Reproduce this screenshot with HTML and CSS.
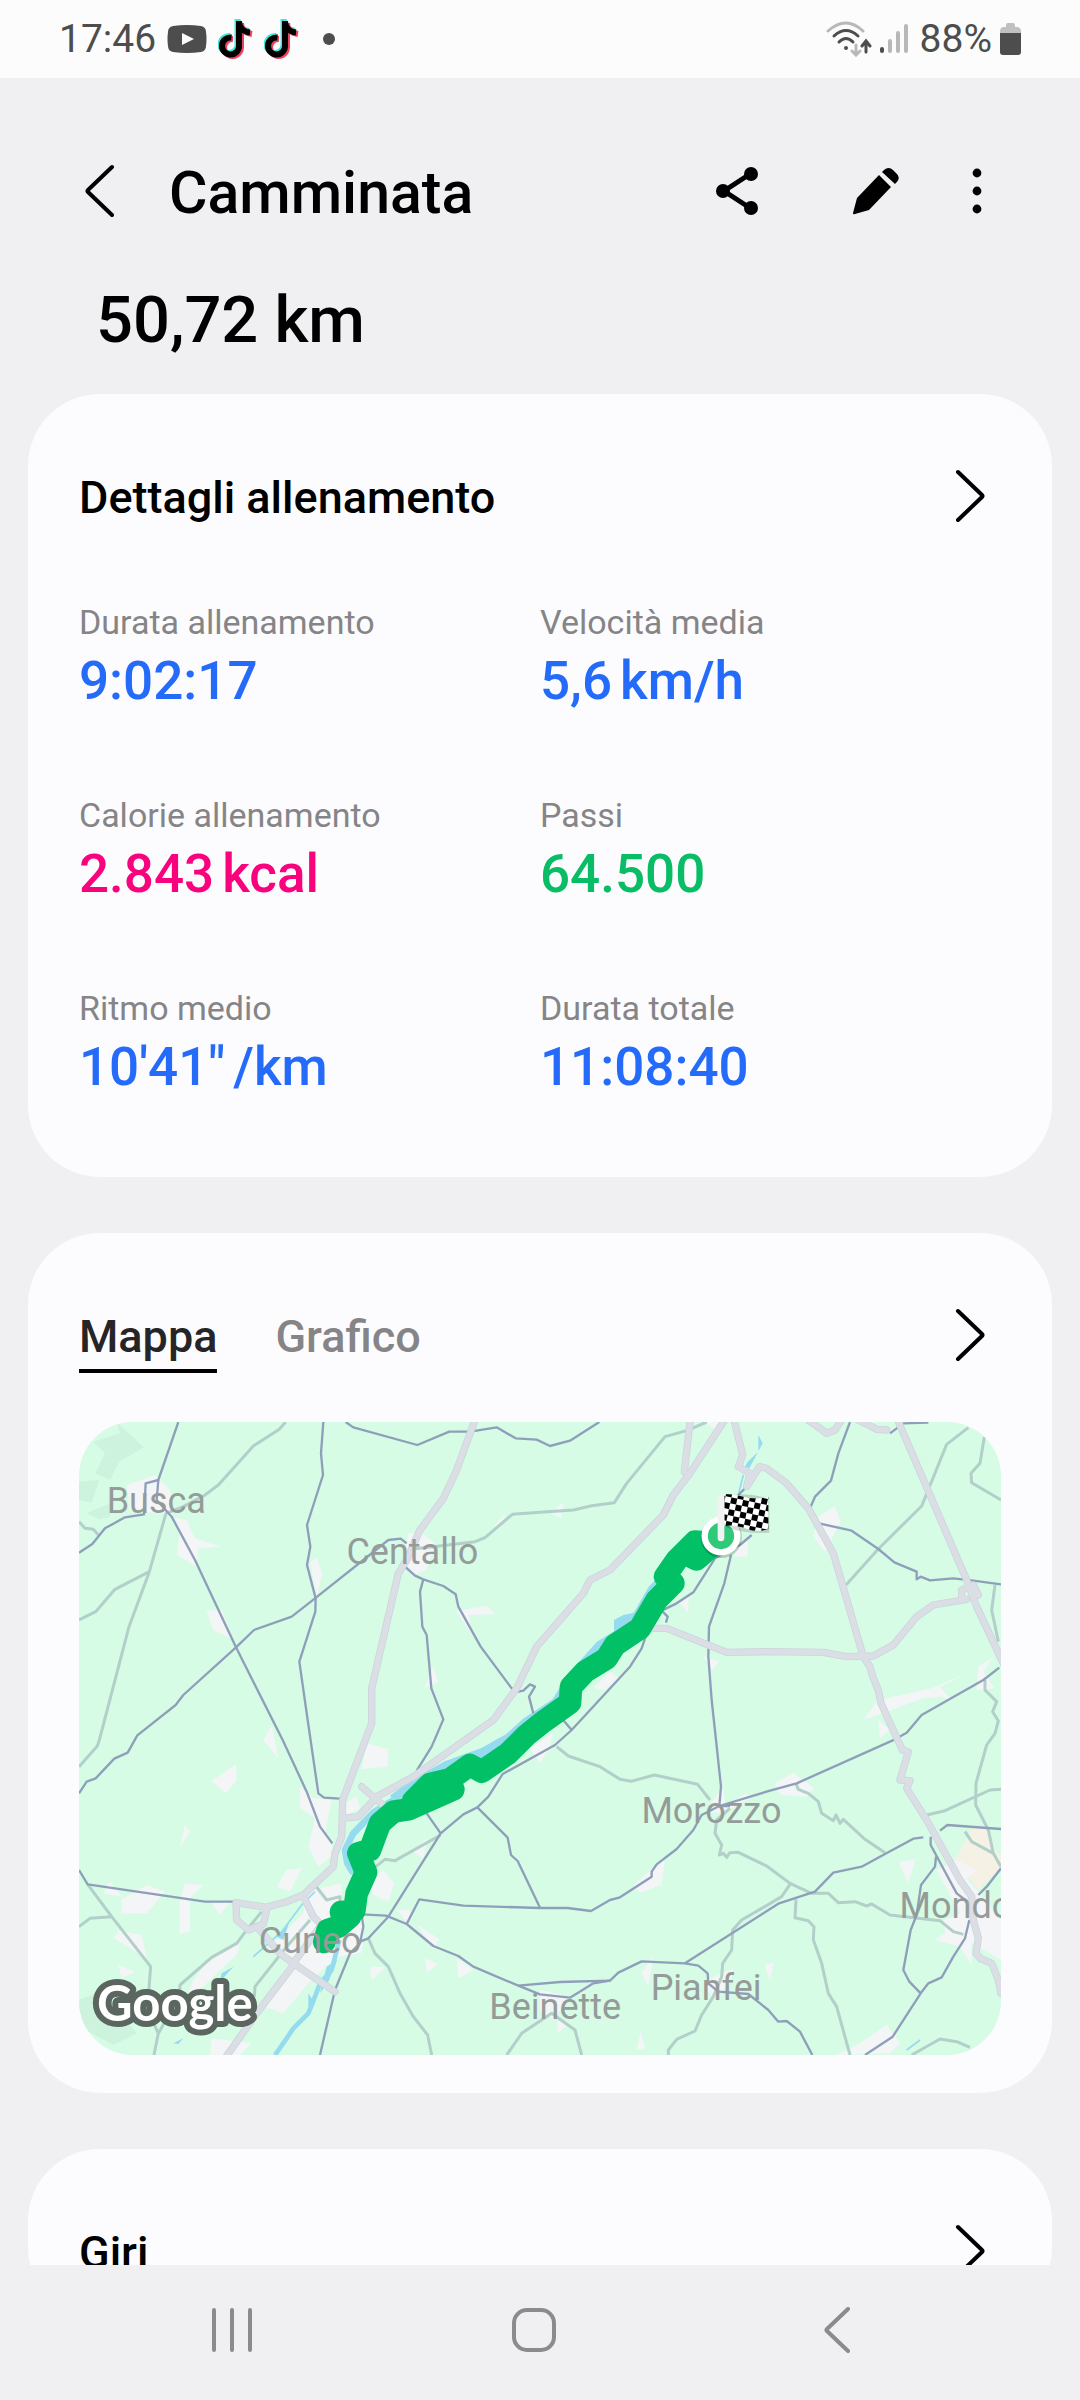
FILE: index.html
```html
<!DOCTYPE html>
<html lang="it">

<head>
    <meta charset="UTF-8">
    <meta name="viewport" content="width=device-width, initial-scale=1.0">
    <title>Camminata</title>
    <link rel="stylesheet" href="styles.css">
</head>

<body>
    <div class="status-bar">
        <span class="status-text">17:46</span>
        <svg class="youtube" width="40" height="28" viewBox="0 0 40 28">
            <path d="M6 1Q20 -1 34 1Q39 2 39 7Q40 14 39 21Q39 26 34 27Q20 29 6 27Q1 26 1 21Q0 14 1 7Q1 2 6 1Z" fill="#4d4d4d" />
            <path d="M15 8L27 14L15 20Z" fill="#fcfcfc" />
        </svg>
        <svg class="tiktok" width="35" height="40" viewBox="0 0 35 40">
            <g fill="none" stroke-width="6">
                <path d="M12 17A8.5 8.5 0 1 0 19.500 25V0C20 7 24 11 31 12" stroke="#3fe6e0" />
                <path d="M15 20A8.500 8.500 0 1 0 23 28V4C23 10 27 14 34 15" stroke="#f0405f" />
                <path d="M13.500 18.500A8.500 8.500 0 1 0 21 26.500V2C21 9 26 13 32 13.500" stroke="#000" />
            </g>
        </svg>
        <svg class="tiktok" width="35" height="40" viewBox="0 0 35 40">
            <g fill="none" stroke-width="6">
                <path d="M12 17A8.5 8.5 0 1 0 19.500 25V0C20 7 24 11 31 12" stroke="#3fe6e0" />
                <path d="M15 20A8.500 8.500 0 1 0 23 28V4C23 10 27 14 34 15" stroke="#f0405f" />
                <path d="M13.500 18.500A8.500 8.500 0 1 0 21 26.500V2C21 9 26 13 32 13.500" stroke="#000" />
            </g>
        </svg>
        <span class="more-dot"></span>
        <div class="status-right">
            <svg width="46" height="36" viewBox="0 0 46 36">
                <g fill="none" stroke-width="3" stroke-linecap="round">
                    <path d="M2 10Q20 -6 37 10" stroke="#b8b8b8" />
                    <path d="M8 15Q20 4 32 15" stroke="#4d4d4d" />
                    <path d="M13 21Q20 14 27 21" stroke="#4d4d4d" />
                    <path d="M30 24V33M26 30L30 34L34 30" stroke="#b8b8b8" />
                    <path d="M40 31V21M36 25L40 20L44 25" stroke="#4d4d4d" />
                </g>
                <circle cx="20" cy="27" r="2" fill="#4d4d4d" />
            </svg>
            <svg class="signal" width="28" height="30" viewBox="0 0 28 30">
                <g fill="none" stroke-width="4" stroke-linecap="round" stroke="#b8b8b8">
                    <path d="M2 25V27" stroke="#4d4d4d" />
                    <path d="M10 17V27M18 9V27M26 2V27" />
                </g>
            </svg>
            <span class="status-text">88%</span>
            <svg class="battery" width="22" height="33" viewBox="0 0 22 33">
                <path d="M6 4V2Q6 0 8 0H13Q15 0 15 2V4H18Q21 5 21 8V10H0V8Q0 5 3 4Z" fill="#c0c0c0" />
                <path d="M0 10H21V29Q21 32 18 32H3Q0 32 0 29Z" fill="#4d4d4d" />
            </svg>
        </div>
    </div>

    <main class="content">
        <header class="top-bar">
            <button type="button" class="icon-btn back" aria-label="Indietro">
                <svg width="30" height="54" viewBox="0 0 30 54">
                    <path d="M27 3L3 26Q2 27 3 28L27 51" class="line" />
                </svg>
            </button>
            <h1>Camminata</h1>
            <button type="button" class="icon-btn share" aria-label="Condividi">
                <svg width="44" height="48" viewBox="0 0 44 48">
                    <path d="M34 7L8 24L34 41" fill="none" stroke="#000" stroke-width="5" />
                    <circle cx="35" cy="7" r="7" />
                    <circle cx="7" cy="24" r="7" />
                    <circle cx="35" cy="41" r="7" />
                </svg>
            </button>
            <button type="button" class="icon-btn edit" aria-label="Modifica">
                <svg width="48" height="48" viewBox="0 0 48 48">
                    <path d="M27 8L39 20L17 43L3 47Q1 48 1 46L5 31Z" />
                    <path d="M30 5Q36 -2 41 3L44 6Q50 11 43 17Z" />
                </svg>
            </button>
            <button type="button" class="icon-btn menu" aria-label="Altre opzioni">
                <svg width="10" height="48" viewBox="0 0 10 48">
                    <circle cx="5" cy="6" r="4.4" />
                    <circle cx="5" cy="24" r="4.4" />
                    <circle cx="5" cy="42" r="4.4" />
                </svg>
            </button>
        </header>
        <p class="distance">50,72 km</p>

        <section class="card">
            <div class="card-head">
                <h2>Dettagli allenamento</h2>
                <button type="button" class="icon-btn open" aria-label="Apri dettagli">
                    <svg width="30" height="54" viewBox="0 0 30 54">
                        <path d="M3 3L27 26Q28 27 27 28L3 51" class="line" />
                    </svg>
                </button>
            </div>
            <dl class="stats">
                <div>
                    <dt>Durata allenamento</dt>
                    <dd class="blue">9:02:17</dd>
                </div>
                <div>
                    <dt>Velocità media</dt>
                    <dd class="blue">5,6<span class="unit">km/h</span></dd>
                </div>
                <div>
                    <dt>Calorie allenamento</dt>
                    <dd class="pink">2.843<span class="unit">kcal</span></dd>
                </div>
                <div>
                    <dt>Passi</dt>
                    <dd class="green">64.500</dd>
                </div>
                <div>
                    <dt>Ritmo medio</dt>
                    <dd class="blue">10'41"<span class="unit">/km</span></dd>
                </div>
                <div>
                    <dt>Durata totale</dt>
                    <dd class="blue">11:08:40</dd>
                </div>
            </dl>
        </section>

        <section class="card">
            <div class="card-head">
                <div class="tabs">
                    <button type="button" class="tab active">Mappa</button>
                    <button type="button" class="tab">Grafico</button>
                </div>
                <button type="button" class="icon-btn open" aria-label="Apri mappa">
                    <svg width="30" height="54" viewBox="0 0 30 54">
                        <path d="M3 3L27 26Q28 27 27 28L3 51" class="line" />
                    </svg>
                </button>
            </div>
            <div class="map">
                <svg class="map-art" viewBox="57 66 2766 1899">
                    <defs>
                        <pattern id="checks" width="36" height="36" patternUnits="userSpaceOnUse" patternTransform="rotate(12 1995 282)">
                            <rect width="36" height="36" fill="#fff" />
                            <path d="M0 0H18V18H0ZM18 18H36V36H18Z" fill="#000" />
                        </pattern>
                    </defs>
                    <rect x="57" y="66" width="2766" height="1899" fill="#d6fce6" />
                    <!-- woods -->
                    <path class="wood" d="M100 125L180 100L170 66L252 142L178 185L150 240L105 220L135 160ZM57 245L118 240L95 308L57 300ZM80 340L150 310V350L120 358ZM57 1800L130 1770L230 1900L160 1935L57 1880Z" />
                    <path class="sand" d="M2740 1280L2785 1275L2805 1350L2823 1370V1400L2755 1470L2685 1380Z" />
                    <!-- towns -->
                    <g class="town">
                        <path d="M200 255L285 225L330 270L335 345L290 340L210 330Z" />
                        <path d="M335 350L380 360L405 415L482 440L415 445L410 500L350 465L358 400Z" />
                        <path d="M440 632L485 630L518 718L460 690Z" />
                        <path d="M750 485L770 475L787 520L770 590Z" />
                        <path d="M1045 400L1085 400L1125 430L1100 510L1060 525L1030 480Z" />
                        <path d="M1187 632L1280 618L1308 642L1225 645L1240 710Z" />
                        <path d="M1118 800L1135 845L1093 865ZM1300 380L1335 343L1330 372Z" />
                        <path d="M635 975L655 1075L610 1020ZM455 1143L528 1092L530 1140L497 1180ZM375 1275L390 1295L360 1342Z" />
                        <path d="M720 1160L760 1195L815 1200L795 1300L825 1360L775 1400L745 1340L765 1255L720 1225Z" />
                        <path d="M920 1030L985 1048L982 1100L905 1108ZM855 1210L890 1190L900 1225L860 1245Z" />
                        <path d="M680 1410L725 1405L690 1475L650 1460Z" />
                        <path d="M130 1480L150 1445L185 1490ZM183 1500L260 1455L315 1475L260 1540L185 1540ZM375 1450L430 1455L390 1495V1595L358 1600V1510ZM455 1510L510 1505L480 1545Z" />
                        <path d="M162 1615L175 1592L245 1605L260 1675ZM175 1695L225 1715L185 1735ZM400 1740L455 1670L540 1630L530 1665L470 1720L370 1820Z" />
                        <path d="M740 1475L845 1450V1500L920 1490L905 1660L830 1670L745 1750L670 1840L600 1815L700 1670L620 1650L730 1540Z" />
                        <path d="M920 1450L970 1410L1003 1450L985 1505L930 1480ZM1010 1530L1050 1530L1045 1570ZM1070 1572L1138 1618L1120 1645ZM930 1700L975 1700L935 1742ZM1095 1675L1133 1692L1100 1720ZM1190 1675L1240 1710L1195 1735ZM455 1915L575 1930L540 1965H450Z" />
                        <path d="M1060 1355L1100 1315L1090 1375ZM1410 1045L1480 1000L1465 1050L1440 1090Z" />
                        <path d="M1475 340L1510 305L1503 355ZM1930 66H1990L1970 90ZM1600 865L1650 815L1675 835L1635 870ZM2025 445L2065 410L2062 470L2025 470Z" />
                        <path d="M2275 350L2325 318L2342 365L2295 455L2260 410ZM1860 610L1885 590V640ZM1930 768L1978 785L1955 810Z" />
                        <path d="M2410 960L2455 900L2615 865L2720 820L2640 862L2680 905L2645 890L2590 895ZM2455 960L2490 990L2460 1015Z" />
                        <path d="M2755 800L2803 768L2770 815L2803 865L2750 870Z" />
                        <path d="M2145 1150L2200 1118L2262 1165L2240 1190L2160 1185ZM1960 1200L1990 1165L1995 1215L2060 1180L2070 1195L1990 1240L1940 1235Z" />
                        <path d="M1720 1455L1815 1375L1805 1455L1740 1478ZM2515 1385L2567 1378L2545 1450Z" />
                        <path d="M2630 1410L2690 1380L2750 1410L2720 1435L2823 1560L2823 1680L2735 1630V1695L2700 1640L2625 1620L2655 1600L2650 1560L2700 1540Z" />
                        <path d="M1930 1745L2020 1705L2010 1750L1960 1800ZM1440 1770L1530 1790L1480 1860L1440 1830ZM1490 1860L1530 1870L1495 1897ZM2115 1695L2140 1688L2130 1745ZM1745 1720L1780 1665L1765 1760ZM1730 1950L1742 1895L1755 1945Z" />
                        <path d="M2330 1965L2400 1930L2480 1875L2520 1930L2490 1960Z" />
                    </g>
                    <!-- rivers -->
                    <path class="river" stroke-width="34" d="M1860 460L1830 520L1780 570L1740 640L1700 690L1620 740L1540 830L1490 910L1400 970L1350 1015L1270 1060L1160 1100L1070 1150L1000 1200" />
                    <path class="river" stroke-width="20" d="M1000 1200L940 1238L880 1300L855 1350L862 1390L880 1420" />
                    <path class="water" d="M1662 690V660L1690 645L1740 635L1720 700L1665 710Z" />
                    <path class="river" stroke-width="14" d="M838 1620L815 1710L780 1750L765 1790L745 1840L700 1885L680 1915L645 1965" />
                    <path class="water" d="M800 1700L832 1680L805 1745L780 1780ZM745 1780L765 1810L745 1850ZM485 1720L520 1700L480 1745ZM340 1930L370 1915L355 1932ZM2095 105L2108 130L2068 205L2055 200L2063 185L2095 155Z" />
                    <path class="river" stroke-width="5" d="M2050 225L2035 285M765 1475L725 1515L665 1595L580 1670M2580 1920L2540 1950" />
                    <path class="water" d="M675 1585L690 1560L670 1620L650 1610Z" />
                    <!-- minor roads -->
                    <g class="minor">
                        <path d="M677 66L658 88L580 138L475 255L435 285L370 320L318 340L268 515L207 680L118 1020L112 1038L57 1100" />
                        <path d="M268 515L165 568L107 635L57 660M57 365L75 385L100 388L115 405" />
                        <path d="M1050 448L1120 440L1245 425L1275 413L1357 343L1440 337L1540 330L1595 317L1663 308L1700 250L1815 110L1880 92L1940 66" />
                        <path d="M2725 83L2660 133L2585 318L2455 447L2358 555M2773 110L2760 190L2733 220L2735 248L2823 300M2805 555L2795 630L2815 725" />
                        <path d="M2775 840V870L2810 905L2798 935L2815 963L2805 1000L2780 1035L2748 1150L2747 1215L2785 1290L2800 1360L2823 1400" />
                        <path d="M1490 1040L1525 1068L1620 1100L1680 1138L1713 1144L1783 1125L1913 1153L1950 1200" />
                        <path d="M2010 1225L1970 1260L1965 1300L1985 1335L1978 1365L1990 1360L2000 1372L2010 1358L2035 1357L2120 1398L2190 1450L2255 1480H2305L2335 1508L2385 1505L2420 1518L2435 1512L2490 1545L2640 1562L2680 1595L2710 1603" />
                        <path d="M2190 1453L2165 1490L2045 1560L2018 1590L2015 1650L1988 1690L1985 1730L1960 1790L1925 1845L1905 1893L1850 1918L1825 1950V1965" />
                        <path d="M2208 1498L2205 1553L2245 1562L2262 1580L2260 1620L2285 1690L2305 1780L2330 1820L2370 1965" />
                        <path d="M2208 1150L2215 1168L2245 1180L2275 1205L2285 1240L2320 1262L2328 1245L2340 1270L2350 1258L2415 1318L2475 1358" />
                        <path d="M2600 1245L2655 1232L2790 1170L2823 1168M2715 1295L2735 1325L2800 1360" />
                        <path d="M1142 1305L1005 1382L975 1378L940 1405M925 1615L945 1660L985 1700L1020 1780L1060 1850L1103 1905L1115 1965" />
                        <path d="M83 1453L155 1550L272 1700L262 1830L295 1900L282 1965M57 1580L90 1555L155 1550" />
                        <path d="M605 1535L560 1590L530 1630L455 1672L360 1755L358 1790L295 1900M750 1560L680 1640L585 1760L583 1790M765 1455L800 1500L840 1490V1520" />
                        <path d="M1565 1965L1545 1890L1475 1840L1385 1900L1340 1965M2555 1965L2640 1917L2690 1925L2730 1942" />
                    </g>
                    <!-- main roads -->
                    <g class="road">
                        <path d="M355 66L295 240L257 250L252 343L195 352L135 385L97 432L57 458" />
                        <path d="M295 240L290 300L335 350L405 480L528 742L668 1020L740 1175L780 1280L817 1330" />
                        <path d="M790 66L783 160L789 225L741 375L751 440L741 495L767 595L766 635L718 785L743 960L775 1180L792 1193L840 1196" />
                        <path d="M857 66L880 82L1072 135L1168 95H1230L1310 82L1367 115L1430 119L1470 138L1530 122L1618 66" />
                        <path d="M1040 430L1022 416L985 420L925 468L765 595L695 650L582 690L528 742L370 885L347 915L232 1006L203 1058L163 1076L107 1135L80 1145L57 1180" />
                        <path d="M1035 500L1065 527L1090 538L1150 558L1187 583L1195 620L1262 740L1355 865L1375 875L1390 872L1410 853L1425 860L1407 890L1420 940" />
                        <path d="M1090 538L1080 575L1087 680L1100 705L1114 865L1150 958L1115 1040L1070 1112" />
                        <path d="M2370 66L2335 160L2313 242L2265 290L2250 325" />
                        <path d="M2277 370L2375 392L2455 447L2503 487L2570 515V538L2582 530L2610 541L2680 535L2740 542L2823 553" />
                        <path d="M2055 265L2035 285M2075 405L2040 435L1965 475L1900 577L1850 610L1805 632L1823 650L1818 668M2490 100L2530 70L2605 68" />
                        <path d="M2013 465L1993 550L1947 680L1945 770L1955 900L1968 1020L1983 1160L1978 1218H2010" />
                        <path d="M1760 700L1745 745L1710 800L1535 990L1485 1035L1328 1122L1285 1190L1252 1222L1210 1243L1142 1300L985 1550L925 1615L900 1625M1505 955L1535 990" />
                        <path d="M2818 803L2770 840L2585 945L2540 998L2505 1018L2210 1150L2130 1172L1978 1218L1925 1245L1900 1290L1850 1347L1790 1393L1775 1415V1430L1680 1492L1650 1500L1593 1533L1523 1524H1440L1210 1517L1078 1498L1040 1572" />
                        <path d="M905 1543L978 1547L1040 1572L1120 1638L1195 1668L1240 1700L1375 1757L1440 1783L1530 1793L1600 1750L1650 1742L1675 1718L1745 1684L1875 1690L2155 1511L2265 1475L2320 1418L2405 1400L2475 1362L2560 1316L2590 1312" />
                        <path d="M1375 1757L1500 1746L1650 1742M1875 1690L1915 1697L1943 1720L1945 1750L1975 1775L2065 1782L2125 1830L2155 1865L2180 1863L2220 1895L2257 1965" />
                        <path d="M2640 1292L2662 1275L2823 1287M2612 1310V1335L2690 1480L2720 1503M2628 1370L2625 1400L2583 1455L2570 1545L2552 1590L2530 1710L2548 1745L2582 1780L2498 1910L2415 1965" />
                        <path d="M2728 1560L2715 1615L2680 1670L2645 1732L2605 1750L2582 1780M2823 1405L2780 1460L2755 1485" />
                        <path d="M1252 1222L1343 1313L1353 1365L1373 1383L1440 1523M1100 1240L1142 1300M57 1410L83 1453L435 1505H525" />
                        <path d="M905 1545L910 1580L900 1630L870 1660L825 1770L780 1965" />
                    </g>
                    <!-- motorways: edge first, then fill -->
                    <g class="motorway-edge">
                        <use href="#motorways" />
                    </g>
                    <g class="motorway">
                        <g id="motorways">
                            <path d="M1245 60L1188 215L1150 295L1080 390L1040 480L1015 520L935 865V970L848 1200L845 1310L825 1360L820 1400L730 1485L680 1505L620 1522L528 1508L530 1560L565 1590L610 1572L622 1522" />
                            <path d="M1994 60L1890 220L1840 285L1810 345L1650 510L1590 540L1570 580L1430 740L1370 865L1300 960L1060 1130L950 1190L895 1250L848 1255M1890 66L1873 215M905 1160L965 1212" />
                            <path d="M2022 60L2048 165L2035 200L2070 220L2060 260L2098 200L2120 205L2180 250L2245 325L2320 460L2410 770L2430 800L2438 830L2455 870L2463 910L2527 1050L2545 1055L2520 1140L2550 1142L2540 1165L2600 1260L2700 1440L2735 1490L2740 1560L2755 1615L2748 1660L2760 1675L2795 1690L2815 1740L2823 1780" />
                            <path d="M1775 685H1820L2000 757L2130 755L2290 757L2360 770L2440 768L2500 735L2570 650L2620 615L2720 598" />
                            <path d="M2513 60L2720 540L2750 620L2830 790M2705 590V570L2740 555L2755 585M2245 60L2300 100L2325 90L2345 60M2395 60L2450 88L2480 90" />
                            <path d="M590 1580L660 1660L700 1690L825 1775M700 1695L590 1840L495 1975M700 1690L780 1580M728 1485L760 1550L800 1590" />
                        </g>
                    </g>
                    <!-- walked route -->
                    <path class="route" d="M793 1626L803 1590L835 1580L870 1550L843 1536L883 1532L890 1480L918 1417L895 1360L930 1350L960 1270L1000 1235L1045 1228L1180 1168L1060 1202L1110 1152L1170 1138L1230 1095L1265 1115L1345 1060L1400 1005L1450 965L1530 908L1533 860L1575 815L1640 775L1665 735L1740 685L1790 600L1840 550L1815 530L1850 480L1905 425L1965 430L1910 478L1875 460" />
                    <!-- finish marker -->
                    <circle cx="1984" cy="412" r="62" fill="#000" opacity=".18" />
                    <circle cx="1983" cy="408" r="49" fill="#2fc97a" stroke="#fff" stroke-width="19" />
                    <path d="M1998 288Q2060 275 2128 296V398Q2060 404 1998 382Z" fill="#000" opacity=".15" />
                    <path d="M1993 282Q2020 282 2040 288Q2090 302 2125 290V388Q2090 398 2060 386Q2020 372 1993 378Z" fill="url(#checks)" />
                    <path d="M1983 293V414" stroke="#f2f2f2" stroke-width="20" stroke-linecap="round" />
                </svg>
                <span class="place busca">Busca</span>
                <span class="place centallo">Centallo</span>
                <span class="place morozzo">Morozzo</span>
                <span class="place mondovi">Mondovì</span>
                <span class="place cuneo">Cuneo</span>
                <span class="place beinette">Beinette</span>
                <span class="place pianfei">Pianfei</span>
                <svg class="google" width="180" height="70" viewBox="0 0 180 70">
                    <text x="10" y="44">Google</text>
                </svg>
            </div>
        </section>

        <section class="card">
            <div class="card-head">
                <h2>Giri</h2>
                <button type="button" class="icon-btn open" aria-label="Apri giri">
                    <svg width="30" height="54" viewBox="0 0 30 54">
                        <path d="M3 3L27 26Q28 27 27 28L3 51" class="line" />
                    </svg>
                </button>
            </div>
        </section>
    </main>

    <nav class="nav-bar">
        <button type="button" class="icon-btn" aria-label="Recenti">
            <svg width="44" height="46" viewBox="0 0 44 46">
                <path d="M4 3V43M22 3V43M40 3V43" class="nav-line" />
            </svg>
        </button>
        <button type="button" class="icon-btn" aria-label="Home">
            <svg width="46" height="46" viewBox="0 0 46 46">
                <rect x="3" y="3" width="40" height="40" rx="13" class="nav-line" />
            </svg>
        </button>
        <button type="button" class="icon-btn" aria-label="Indietro">
            <svg width="28" height="46" viewBox="0 0 28 46">
                <path d="M25 2L4 22Q3 23 4 24L25 44" class="nav-line" />
            </svg>
        </button>
    </nav>
</body>

</html>
```
FILE: styles.css
```css
* {
    box-sizing: border-box;
}

body {
    margin: 0;
    height: 100vh;
    display: flex;
    flex-direction: column;
    background-color: #f0f0f2;
    color: #000;
    font-family: Roboto, "Liberation Sans", sans-serif;
}

h1,
h2,
p,
dd {
    margin: 0;
    font-weight: 500;
}

svg {
    display: block;
}

/* status bar */
.status-bar {
    flex: none;
    height: 78px;
    padding: 0 58px 0 59px;
    display: flex;
    align-items: center;
    background-color: #fcfcfc;
}

.status-text {
    font-size: 39px;
    color: #4d4d4d;
}

.youtube {
    margin-left: 11px;
}

.tiktok {
    margin-left: 11px;
}

.more-dot {
    width: 12px;
    height: 12px;
    margin-left: 24px;
    border-radius: 50%;
    background-color: #4d4d4d;
}

.status-right {
    margin-left: auto;
    display: flex;
    align-items: center;
}

.signal {
    margin: 0 12px 0 8px;
}

.battery {
    margin-left: 8px;
}

/* page */
.content {
    flex: 1;
    min-height: 0;
    padding: 0 28px;
    overflow-y: auto;
    scrollbar-width: none;
}

.icon-btn {
    flex: none;
    padding: 0;
    border: 0;
    background: none;
    display: flex;
    align-items: center;
    justify-content: center;
    cursor: pointer;
}

.line {
    fill: none;
    stroke: #000;
    stroke-width: 4;
    stroke-linecap: round;
}

.top-bar {
    padding: 81px 70px 0 57px;
    display: flex;
    align-items: center;
}

h1 {
    flex: 1;
    margin-left: 54px;
    padding-top: 4px;
    font-size: 59px;
    line-height: 60px;
}

.share {
    margin-right: 92px;
}

.edit {
    margin-right: 72px;
}

.distance {
    margin: 59px 0 36px 68px;
    font-size: 65px;
    line-height: 76px;
}

/* cards */
.card {
    margin-bottom: 56px;
    padding: 72px 51px 38px;
    border-radius: 72px;
    background-color: #fcfcfe;
}

.card-head {
    height: 60px;
    display: flex;
    align-items: center;
    justify-content: space-between;
}

h2,
.tab {
    font-size: 45px;
    line-height: 64px;
}

h2 {
    padding-top: 3px;
}

.open {
    width: 62px;
    height: 60px;
}

.stats {
    margin: 72px 0 37px;
    display: grid;
    grid-template-columns: 1fr 1fr;
    row-gap: 75px;
}

dt {
    font-size: 34px;
    line-height: 48px;
    color: #858587;
}

dd {
    font-size: 53px;
    line-height: 70px;
}

.unit {
    margin-left: 8px;
}

.blue {
    color: #256bfa;
}

.pink {
    color: #f9027d;
}

.green {
    color: #09bd66;
}

/* tabs */
.tabs {
    padding-top: 8px;
    display: flex;
    gap: 58px;
}

.tab {
    padding: 0;
    border: 0;
    border-bottom: 4px solid transparent;
    background: none;
    font-family: inherit;
    font-weight: 500;
    color: #858587;
    cursor: pointer;
}

.tab.active {
    border-color: #000;
    color: #252528;
}

/* map */
.map {
    position: relative;
    margin-top: 57px;
    border-radius: 54px;
    overflow: hidden;
}

.map-art {
    width: 100%;
    height: auto;
}

.wood {
    fill: #cdf3df;
}

.sand {
    fill: #f6f1e5;
}

.town {
    fill: #f4f5f6;
}

.water {
    fill: #95dbf0;
}

.river,
.minor,
.road,
.motorway,
.motorway-edge,
.route {
    fill: none;
    stroke-linejoin: round;
}

.river {
    stroke: #95dbf0;
}

.minor {
    stroke: #b2cfc9;
    stroke-width: 9;
}

.road {
    stroke: #8f9fba;
    stroke-width: 7;
}

.motorway-edge {
    stroke: #cbd5dc;
    stroke-width: 22;
    stroke-linecap: round;
}

.motorway {
    stroke: #dbdfe5;
    stroke-width: 17;
    stroke-linecap: round;
}

.route {
    stroke: #02c065;
    stroke-width: 68;
    stroke-linecap: round;
}

.place {
    position: absolute;
    font-size: 36px;
    line-height: 44px;
    color: #949b99;
}

.busca {
    left: 3%;
    top: 9%;
}

.centallo {
    left: 29%;
    top: 17%;
}

.morozzo {
    left: 61%;
    top: 58%;
}

.mondovi {
    left: 89%;
    top: 73%;
}

.cuneo {
    left: 19.5%;
    top: 78.5%;
}

.beinette {
    left: 44.5%;
    top: 89%;
}

.pianfei {
    left: 62%;
    top: 86%;
}

.google {
    position: absolute;
    left: 8px;
    bottom: 8px;
    font-family: Lato, sans-serif;
    font-size: 49px;
    font-weight: 700;
    fill: #fff;
    stroke: #5a665f;
    stroke-width: 12;
    stroke-linejoin: round;
    paint-order: stroke;
}

/* navigation */
.nav-bar {
    flex: none;
    height: 135px;
    padding: 0 92px 5px 81px;
    display: grid;
    grid-template-columns: repeat(3, 1fr);
    background-color: #f0f0f2;
}

.nav-line {
    fill: none;
    stroke: #8b8b8b;
    stroke-width: 4;
    stroke-linecap: round;
}
```
